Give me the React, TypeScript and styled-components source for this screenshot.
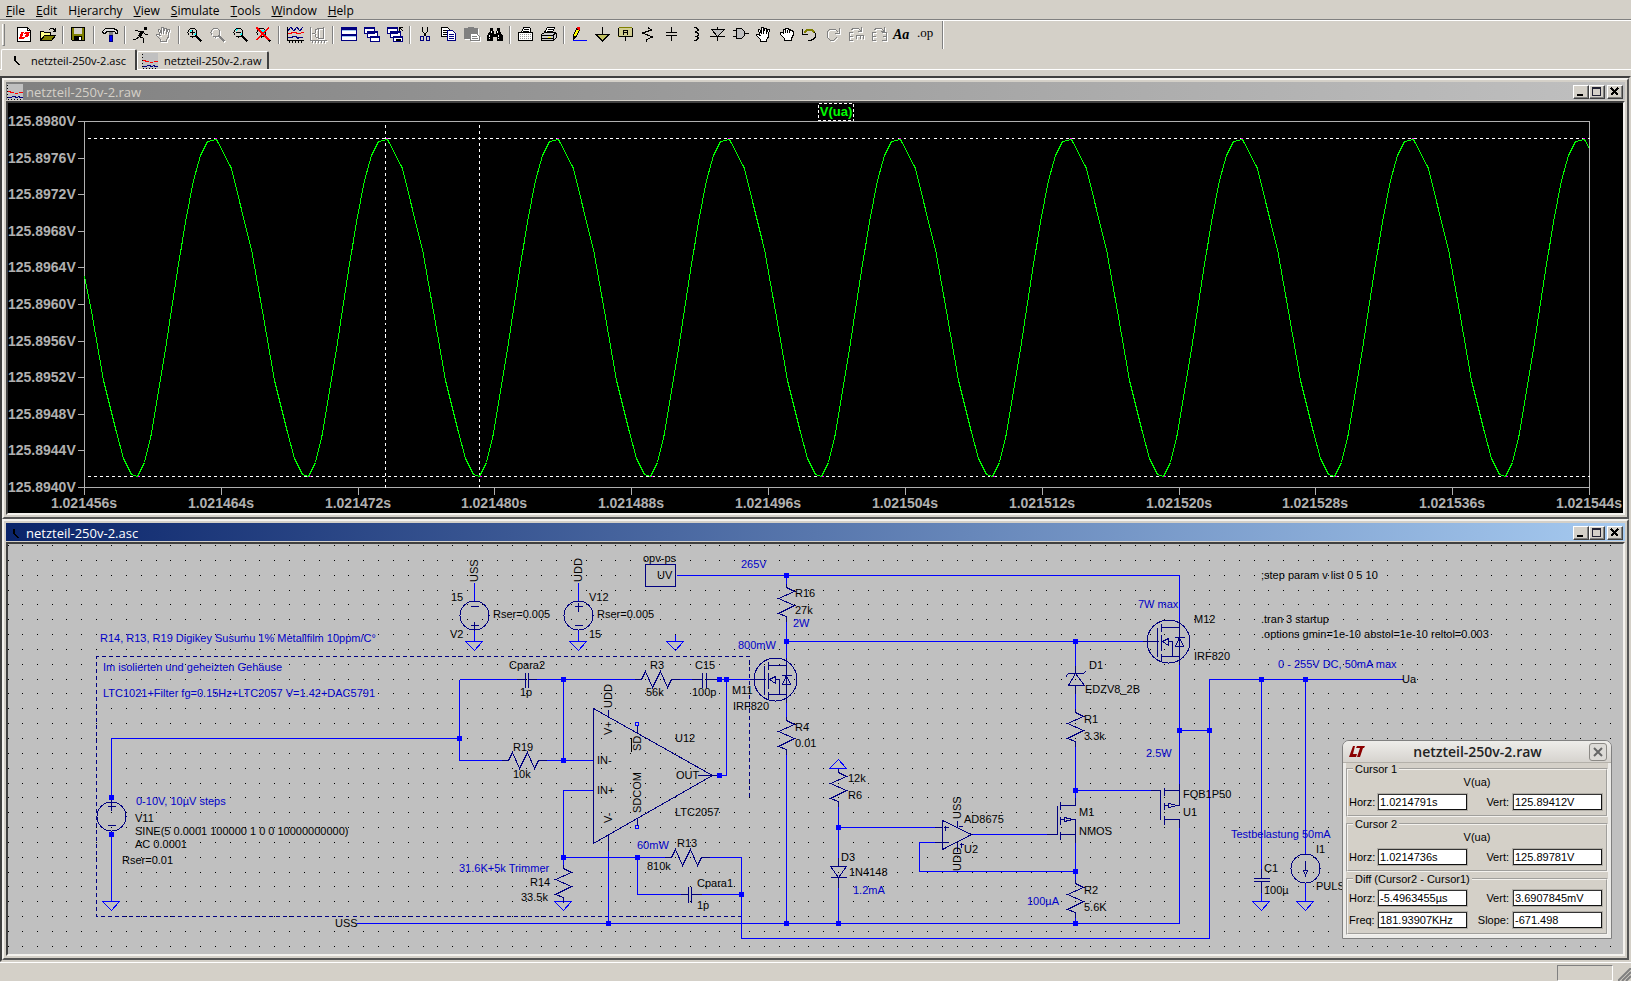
import React from "react";
import styled, { createGlobalStyle } from "styled-components";

const FACE = "#d4d0c8";
const SHADOW = "#808080";
const DARK = "#404040";
const UI_FONT = '"Open Sans", "Noto Sans", sans-serif';

const GlobalStyle = createGlobalStyle`
  html, body { margin: 0; padding: 0; }
  body { background: ${FACE}; color: #000; font-family: ${UI_FONT}; font-size: 12px; }
  * { box-sizing: border-box; }
  button { font: inherit; color: inherit; }
`;

const Shell = styled.div`
  display: flex;
  flex-direction: column;
  min-height: 100vh;
  background: ${FACE};
`;

/* ---------- menu bar ---------- */

const MenuBar = styled.nav`
  display: flex;
  gap: 11px;
  height: 20px;
  padding: 3px 6px 0;
  border-bottom: 1px solid ${SHADOW};
`;

const MenuItem = styled.button`
  padding: 0;
  border: 0;
  background: none;
  line-height: 16px;
`;

const Accel = styled.span`
  text-decoration: underline;
`;

const menus: [string, string, string][] = [
  ["", "F", "ile"],
  ["", "E", "dit"],
  ["H", "i", "erarchy"],
  ["", "V", "iew"],
  ["", "S", "imulate"],
  ["", "T", "ools"],
  ["", "W", "indow"],
  ["", "H", "elp"],
];

/* ---------- toolbar ---------- */

const Toolbar = styled.div`
  display: flex;
  align-items: center;
  height: 29px;
  border-top: 1px solid #fff;
`;

const Grip = styled.span`
  width: 3px;
  height: 22px;
  margin: 0 8px 0 2px;
  border-right: 1px solid ${SHADOW};
  border-bottom: 1px solid ${SHADOW};
  border-left: 1px solid #fff;
`;

const Divider = styled.span`
  width: 2px;
  height: 18px;
  margin: 0 3px;
  border-left: 1px solid ${SHADOW};
  border-right: 1px solid #fff;
`;

const BarEnd = styled.span`
  width: 2px;
  height: 28px;
  margin-left: 6px;
  border-left: 1px solid ${SHADOW};
  border-right: 1px solid #fff;
`;

const ToolButton = styled.button`
  display: flex;
  width: 23px;
  height: 22px;
  padding: 3px 0 0 4px;
  border: 0;
  background: none;
`;

const IconSvg = styled.svg`
  display: block;
  flex: none;
  width: 17px;
  height: 17px;
  overflow: visible;
  fill: none;
  stroke: currentColor;
  shape-rendering: crispEdges;
`;

const GlyphText = styled.text`
  font-family: "Liberation Serif", serif;
  fill: #000;
  stroke: none;
`;

type ToolDef = { name: string; off?: boolean; art: React.ReactNode } | "sep";

const magnifier = (
  <>
    <circle cx="5.5" cy="5.5" r="4.5" />
    <path d="M9 9L14.5 14.5" strokeWidth="2" />
  </>
);

const cascade = (
  <>
    <path d="M.5 .5h10v6h-10zM3.500 4.500h10v6h-10zM6.500 9.500h9v5h-9z" fill="#fff" stroke="#000080" />
    <path d="M1 1.500h9M4 5.500h9M7 10.500h8" stroke="#000080" />
  </>
);

const openHand =
  "M4.5 14.5v-2l-4-4v-1.500h2l2 2-2.500-7h1.500l2 4.500v-6h2v6l1-5.500h1.500v6l2-4.500h1.500l-1.500 8-1.500 2v2.500z";

const tools: ToolDef[] = [
  {
    name: "New schematic",
    art: (
      <>
        <path d="M.5 .5h10l3 3v11h-13z" fill="#fff" />
        <path d="M10.500 .5v3h3" />
        <path d="M4 5h3l-2 5h3l-1 2H2zM8 5h5l-2 5h-3l1-3h-2z" fill="#f00" stroke="none" />
      </>
    ),
  },
  {
    name: "Open",
    art: (
      <>
        <path d="M.5 13.500v-9h3l1 1h6v3" fill="#ff8" />
        <path d="M.5 13.500l4-5h11l-4 5z" fill="#808000" />
        <path d="M9 2.500l2-1h2l2 2M15.500 1v3h-3" />
      </>
    ),
  },
  "sep",
  {
    name: "Save",
    art: (
      <>
        <path d="M.5 .5h13v13h-12l-1-1z" fill="#808000" />
        <path d="M3 1h8v6h-8z" fill={FACE} stroke="none" />
        <path d="M3 9h8v5h-8z" fill="#000" stroke="none" />
        <path d="M8 10h2v3h-2z" fill="#fff" stroke="none" />
      </>
    ),
  },
  "sep",
  {
    name: "Control panel",
    art: (
      <>
        <path d="M.5 4.500l3-3h8l4 2v2.500h-2l-1-1.500h-8l-1 2h-2z" fill="#ddd" />
        <path d="M7 5h4v3h-4z" fill="#808080" stroke="none" />
        <path d="M7 8h3v6h-3z" fill="#00f" stroke="#000080" />
      </>
    ),
  },
  "sep",
  {
    name: "Run",
    art: (
      <>
        <path d="M11 0h3v3h-3z" fill="#000" stroke="none" />
        <path d="M10 4.500l-4 5" strokeWidth="3" />
        <path d="M1.500 3.500h3l1.500 1h4l2 2.500h3M7 10l3 1v4.500M6 10l-3 2h-3" />
      </>
    ),
  },
  { name: "Halt", off: true, art: <path d={openHand} /> },
  "sep",
  {
    name: "Zoom in",
    art: (
      <>
        <path d="M3 3h2v1h-1v2h-1zM7 8h2v-2h-1z" fill="#0ff" stroke="none" />
        {magnifier}
        <path d="M3 5.500h5M5.500 3v5" />
      </>
    ),
  },
  { name: "Pan", off: true, art: magnifier },
  {
    name: "Zoom out",
    art: (
      <>
        <path d="M3 2h2v1h-1v1h-1zM7 8h2v-2h-1z" fill="#0ff" stroke="none" />
        {magnifier}
        <path d="M3 5.500h5" />
      </>
    ),
  },
  {
    name: "Zoom full extents",
    art: (
      <>
        <path d="M5 3h4v6h-2z" fill="#0ff" stroke="none" />
        {magnifier}
        <path d="M0 .5L12.500 13M1 .5L13.500 13M13 .5L.5 13" stroke="#f00" />
      </>
    ),
  },
  "sep",
  {
    name: "Autorange Y",
    art: (
      <>
        <path d="M.5 0v13.500h16M2.500 14v2M5.500 14v2M8.500 14v2M11.500 14v2M14.500 14v2" />
        <path d="M1 4l3-4 3 4 3-4 3 4 3-4M1 10.500h4l1-1h3l2 2 1-1h4" stroke="#000080" />
        <path d="M1 6.500h3l1-1h4l1 1h3l2-1h2" stroke="#f00" />
      </>
    ),
  },
  {
    name: "Pick visible traces",
    off: true,
    art: (
      <path d="M.5 0v13.500h16M2.500 14v2M5.500 14v2M8.500 14v2M11.500 14v2M14.500 14v2M2 6.500h3l1-4 2-1h5M5 7l1 3 2 1h5M13.500 0v12M8.500 2v9" />
    ),
  },
  "sep",
  {
    name: "Tile windows",
    art: (
      <>
        <path d="M.5 .5h15v13h-15z" fill="#fff" stroke="#000080" />
        <path d="M0 2h16M0 8h16" stroke="#000080" strokeWidth="2" />
        <path d="M1 3.500h14M1 9.500h14" stroke="#a6caf0" />
      </>
    ),
  },
  { name: "Cascade windows", art: cascade },
  {
    name: "Close all windows",
    art: (
      <>
        {cascade}
        <path d="M12 .5h4M12.500 0v4M13 1l3 3" />
        <path d="M9 12l5 2M14 12l-5 2" />
      </>
    ),
  },
  "sep",
  {
    name: "Cut",
    art: (
      <>
        <path d="M4.500 0v4l4 6M9.500 0v4l-4 6" />
        <path d="M2.500 9.500h3v4h-3zM8.500 9.500h3v4h-3z" stroke="#000080" />
      </>
    ),
  },
  {
    name: "Copy",
    art: (
      <>
        <path d="M.5 .5h6l2 2v7h-8z" fill="#fff" />
        <path d="M2 3.500h4M2 5.500h4M2 7.500h4" />
        <path d="M6.500 3.500h5l3 3v7h-8z" fill="#fff" stroke="#000080" />
        <path d="M8 7.500h5M8 9.500h5M8 11.500h5" stroke="#000080" />
      </>
    ),
  },
  {
    name: "Paste",
    off: true,
    art: (
      <>
        <path d="M.5 1.500h4v-1h5v1h4v10h-13z" fill="currentColor" />
        <path d="M6.500 6.500h6l3 3v4h-9z" fill="#fff" />
        <path d="M8 9.500h5M8 11.500h6" />
      </>
    ),
  },
  {
    name: "Find",
    art: (
      <>
        <path d="M3 1h3v3h1v3h2v-3h1v-3h3v3l3 5v5h-6v-4h-4v4h-6v-5l3-5z" fill="#000" stroke="none" />
        <path d="M2.500 8v4M4.500 4v3M11.500 8v4M10.500 4v3" stroke="#fff" strokeDasharray="2 1" />
      </>
    ),
  },
  "sep",
  {
    name: "Print preview",
    art: (
      <>
        <path d="M.5 5.500h14v8h-14zM3.500 5.500l2-5h6l1 1v4" fill="#fff" />
        <path d="M2 7.500h11M2 9.500h11M2 11.500h11" stroke="#999" strokeDasharray="1 1" />
        <path d="M6 2.500h5M5 4.500h6" />
      </>
    ),
  },
  {
    name: "Print",
    art: (
      <>
        <path d="M3.500 5.500l3-5h7l-2 5z" fill="#fff" />
        <path d="M.5 7.500l3-2h11l1 1v4l-3 3h-12z" fill="#ccc" />
        <path d="M7 2.500h5M6 4.500h5M1 8.500h11l3-3M1 11.500h11M12.500 9v4" />
        <path d="M7 10.500h3" stroke="#ff0" />
      </>
    ),
  },
  "sep",
  {
    name: "Draw wire",
    art: (
      <>
        <path d="M1.500 8.500l3-7 3 1.500-3 6-3 3z" fill="#ff0" />
        <path d="M5 0h3v3h-2z" fill="#f00" stroke="none" />
        <path d="M1.500 9v3" strokeWidth="2" />
        <path d="M1 13.500h14" stroke="#00f" />
      </>
    ),
  },
  {
    name: "Place ground",
    art: (
      <>
        <path d="M7.500 0v7" />
        <path d="M1 7.500h13l-6.500 6.500z" fill="#c0c060" />
      </>
    ),
  },
  {
    name: "Label net",
    art: (
      <>
        <path d="M.5 1.500l1-1h12l1 1v8h-14z" fill="#d0cc90" stroke="#808000" />
        <path d="M.5 1v8M14.500 1v8M.5 9.500h14M7.500 10v4M5.500 8v-4l1-1h2l1 1v4M6 5.500h3" />
      </>
    ),
  },
  { name: "Resistor", art: <path d="M7.500 0v1l3 2-9 3 10 4-6 2.500v2" /> },
  { name: "Capacitor", art: <path d="M7.500 0v5M2 5.500h11M2 8.500h11M7.500 8v6" /> },
  {
    name: "Inductor",
    art: <path d="M7 .5h2l2 2v1l-2 1h-1M8 5.500h2l1 1v2l-1 1h-2M8 9.500h2l1 1v1l-2 2h-2" />,
  },
  {
    name: "Diode",
    art: (
      <>
        <path d="M7.500 0v14M0 9.500h15" />
        <path d="M1.500 2.500h13l-7 7z" fill="#c0c0c0" />
      </>
    ),
  },
  {
    name: "Component",
    art: (
      <>
        <path d="M3.500 1.500h5l3 3v4l-3 3h-5z" fill="#c0c0c0" />
        <path d="M0 3.500h3M0 9.500h3M12 6.500h4" />
      </>
    ),
  },
  { name: "Move", art: <path d={openHand} fill="#fff" stroke="#000" /> },
  {
    name: "Drag",
    art: (
      <path
        d="M5.500 13.500v-2l-4-4v-2h2l1 1v-4h2l.5-1h2l.5 1h2v1h1.500l1 1v4l-1.500 3v2zM6.500 3v3M8.500 3v3M10.500 3v3"
        fill="#fff"
      />
    ),
  },
  {
    name: "Undo",
    art: (
      <>
        <path d="M2 6l3-3h5l3 3" stroke="#808000" strokeWidth="2" />
        <path d="M.5 2v5h5M12.500 5l1 2v3l-2 2-3 1.500h-3" />
      </>
    ),
  },
  { name: "Redo", off: true, art: <path d="M14.500 1v5h-5M13 5l-3-3h-5l-3 3v5l3 3h4l3-3" /> },
  {
    name: "Rotate",
    off: true,
    art: <path d="M1.500 5v8M1 5.500h4M1 9.500h4M1 13.500h4M8 8.500h8M8.500 8v4M12.500 8v4M15.500 8v4M3 3l3-2h4l3 3M13.500 0v4h-4" />,
  },
  {
    name: "Mirror",
    off: true,
    art: <path d="M1.500 5v8M1 5.500h4M1 9.500h4M1 13.500h4M15.500 5v8M11 5.500h5M12 9.500h4M11 13.500h5M3 3l3-2h4l3 3M13.500 0v4h-4" />,
  },
  {
    name: "Text",
    art: (
      <GlyphText x="-1" y="12" fontSize="14" fontStyle="italic" fontWeight="bold">
        Aa
      </GlyphText>
    ),
  },
  {
    name: "SPICE directive",
    art: (
      <GlyphText x="0" y="10" fontSize="13">
        .op
      </GlyphText>
    ),
  },
];

function Tool({ def }: { def: ToolDef }) {
  if (def === "sep") return <Divider />;
  return (
    <ToolButton type="button" aria-label={def.name} disabled={def.off}>
      <IconSvg viewBox="0 0 17 17" color="#000">
        {def.off ? (
          <>
            <g transform="translate(1 1)" color="#fff" stroke="#fff">
              {def.art}
            </g>
            <g color={SHADOW} stroke={SHADOW}>
              {def.art}
            </g>
          </>
        ) : (
          def.art
        )}
      </IconSvg>
    </ToolButton>
  );
}

/* ---------- tabs ---------- */

const TabStrip = styled.div`
  display: flex;
  align-items: flex-end;
  height: 21px;
  margin-bottom: 6px;
  padding-left: 1px;
  border-bottom: 1px solid #fff;
  font-size: 11px;
`;

const Tab = styled.button<{ $active?: boolean }>`
  display: flex;
  align-items: center;
  gap: ${(p) => (p.$active ? 7 : 6)}px;
  width: ${(p) => (p.$active ? 136 : 132)}px;
  height: ${(p) => (p.$active ? 21 : 18)}px;
  margin-bottom: ${(p) => (p.$active ? -1 : 0)}px;
  padding: 0 0 0 ${(p) => (p.$active ? 6 : 4)}px;
  border: 0;
  border-top: 1px solid #fff;
  border-left: 1px solid #fff;
  border-right: 2px solid ${DARK};
  border-radius: 2px 2px 0 0;
  background: ${FACE};
  white-space: nowrap;
`;

const DocIcon = styled.svg`
  display: block;
  flex: none;
  width: 16px;
  height: 16px;
  fill: none;
  shape-rendering: crispEdges;
`;

const SchematicIcon = () => (
  <DocIcon viewBox="0 0 16 16" aria-hidden="true">
    <path d="M6 4h2v5h1v1h1v1h1v1h1v1h-2v-1h-1v-1h-1v-1h-1v-1h-1z" fill="#000" />
  </DocIcon>
);

const WaveIcon = () => (
  <DocIcon viewBox="0 0 16 16" aria-hidden="true">
    <path d="M0 0h16v16h-16z" fill="#c0c0c0" />
    <path d="M.5 1v15" stroke="#000" strokeDasharray="1 2" />
    <path d="M1 15.500h15" stroke="#000" strokeDasharray="1 2" />
    <path d="M1 7.500h2l1 1h3M8 9.500h3M12 8.500h4" stroke="#f00" />
    <path d="M1 13.500h4M5 12.500h4M8 13.500h3M11 12.500h2M12 13.500h4" stroke="#000080" />
  </DocIcon>
);

/* ---------- child windows ---------- */

const Mdi = styled.main`
  display: flex;
  flex: 1;
  flex-direction: column;
  border: 2px solid;
  border-color: ${DARK} ${FACE} ${FACE} ${DARK};
  background: ${SHADOW};
`;

const ChildWindow = styled.section`
  display: flex;
  flex: 1;
  flex-direction: column;
  padding: 2px;
  border: 2px solid;
  border-color: #f4f2ee #555 #555 #f4f2ee;
  background: ${FACE};
`;

const TitleBar = styled.header<{ $active?: boolean }>`
  display: flex;
  align-items: center;
  height: 18px;
  margin-bottom: 1px;
  padding: 1px 2px 0 1px;
  background: ${(p) =>
    p.$active
      ? "linear-gradient(90deg, #0a246a, #a6caf0)"
      : "linear-gradient(90deg, #808080, #c0c0c0)"};
  color: ${(p) => (p.$active ? "#fff" : FACE)};
`;

const TitleText = styled.h2`
  flex: 1;
  margin: 0 0 0 3px;
  padding-top: 1px;
  font-size: 13px;
  font-weight: 400;
  line-height: 18px;
`;

const CaptionButton = styled.button<{ $apart?: boolean }>`
  display: flex;
  width: 16px;
  height: 14px;
  margin-left: ${(p) => (p.$apart ? 2 : 0)}px;
  padding: 0;
  border: 1px solid;
  border-color: #fff ${DARK} ${DARK} #fff;
  background: ${FACE};
  box-shadow: inset -1px -1px ${SHADOW};
  svg { width: 14px; height: 12px; fill: none; stroke: #000; shape-rendering: crispEdges; }
`;

const Client = styled.div<{ $dark?: boolean }>`
  position: relative;
  flex: 1;
  border: 2px solid;
  border-color: ${DARK} #f4f2ee #f4f2ee ${DARK};
  background: ${(p) => (p.$dark ? "#000" : "#c0c0c0")};
  overflow: hidden;
`;

const Drawing = styled.svg`
  display: block;
  width: 100%;
  fill: none;
  shape-rendering: crispEdges;
`;

function DocWindow(props: {
  title: string;
  active?: boolean;
  dark?: boolean;
  icon: React.ReactNode;
  children: React.ReactNode;
}) {
  return (
    <ChildWindow>
      <TitleBar $active={props.active}>
        {props.icon}
        <TitleText>{props.title}</TitleText>
        <CaptionButton type="button" aria-label="Minimize">
          <svg viewBox="0 0 14 12"><path d="M3 9h6" strokeWidth="2" /></svg>
        </CaptionButton>
        <CaptionButton type="button" aria-label="Maximize">
          <svg viewBox="0 0 14 12"><path d="M2.500 1.500h8v8h-8zM2 2.500h9" stroke="#223" /></svg>
        </CaptionButton>
        <CaptionButton type="button" aria-label="Close" $apart>
          <svg viewBox="0 0 14 12"><path d="M3 2l7 7M10 2l-7 7" strokeWidth="2" /></svg>
        </CaptionButton>
      </TitleBar>
      <Client $dark={props.dark}>{props.children}</Client>
    </ChildWindow>
  );
}

/* ---------- waveform ---------- */

const AxisText = styled.text`
  font: bold 14px "Liberation Sans", Arial, sans-serif;
  fill: #b0b0b0;
`;

const TraceText = styled.text`
  font: bold 13px "Liberation Sans", Arial, sans-serif;
  fill: #0f0;
`;

const PLOT = { left: 76, right: 1581, top: 18, bottom: 384 };
const yLabels = ["125.8980V", "125.8976V", "125.8972V", "125.8968V", "125.8964V", "125.8960V",
  "125.8956V", "125.8952V", "125.8948V", "125.8944V", "125.8940V"];
const xLabels = ["1.021456s", "1.021464s", "1.021472s", "1.021480s", "1.021488s", "1.021496s",
  "1.021504s", "1.021512s", "1.021520s", "1.021528s", "1.021536s", "1.021544s"];
const PERIOD = 171;
const cycle: [number, number][] = [
  [0, 373], [7, 359], [14, 330], [20, 294], [27, 252], [40, 167], [49, 113], [56, 77],
  [63, 52], [70, 38], [79, 36], [94, 65], [104, 106], [114, 146], [125, 208],
  [137, 277], [150, 329], [157, 355], [165, 371],
];

function tracePath() {
  const pts: string[] = [];
  for (let n = -1; n < 9; n++) {
    for (const [dx, y] of cycle) {
      const x = 129 + n * PERIOD + dx;
      if (x > PLOT.left + 2 && x <= PLOT.right) pts.push(`${x} ${y}`);
    }
  }
  return `M${PLOT.left} 173L${pts.join("L")}L${PLOT.right} 45`;
}

function Waveform() {
  const yStep = (PLOT.bottom - PLOT.top) / 10;
  const xStep = (PLOT.right - PLOT.left) / 11;
  const ys = yLabels.map((_, i) => Math.round(PLOT.top + i * yStep));
  const xs = xLabels.map((_, i) => Math.round(PLOT.left + i * xStep));
  return (
    <Drawing viewBox="0 0 1615 410" role="img" aria-label="Waveform of V(ua)">
      <g transform="translate(.5 .5)">
        <path
          stroke="#b0b0b0"
          d={
            `M${PLOT.left} ${PLOT.top}H${PLOT.right}V${PLOT.bottom}H${PLOT.left}Z` +
            ys.map((y) => `M69 ${y}h7`).join("") +
            xs.map((x) => `M${x} ${PLOT.bottom}v7`).join("")
          }
        />
        <path stroke="#fff" strokeDasharray="3 3" d="M79 35H1581M79 373H1581M377 21V384M471 21V384" />
        <path stroke="#0f0" d={tracePath()} />
        <path
          stroke="#f0f"
          d={Array.from({ length: 9 }, (_, n) => `M${129 + n * PERIOD} 373h2M${206 + n * PERIOD} 35h2`).join("")}
        />
        <rect x="810" y="0" width="35" height="17" stroke="#fff" strokeDasharray="3 2" />
      </g>
      <TraceText x="828" y="13" textAnchor="middle">V(ua)</TraceText>
      {yLabels.map((t, i) => (
        <AxisText key={t} x="0" y={ys[i] + 5}>{t}</AxisText>
      ))}
      {xLabels.map((t, i) => (
        <AxisText key={t} x={xs[i]} y="405" textAnchor="middle">{t}</AxisText>
      ))}
    </Drawing>
  );
}

/* ---------- schematic ---------- */

const NetText = styled.text<{ $note?: boolean }>`
  font: 11px "Liberation Sans", Arial, sans-serif;
  fill: ${(p) => (p.$note ? "#0000c8" : "#000")};
`;

const WIRE = "#0000ff";
const PART = "#000080";

const gridPath = (() => {
  let d = "";
  for (let j = 0; j < 28; j++) {
    const y = Math.round(545 + j * 14.846);
    for (let i = -7; i < 102; i++) d += `M${Math.max(8, Math.round(111 + i * 14.838))} ${y}h1`;
  }
  return d;
})();

const wires = [
  "M111 797V738H459M459 679V760M111 834V901",
  "M474 582V601M474 630V641M578 582V601M578 630V641M675 634V641",
  "M676 575H1179V619M786 575V583M786 618V657M786 641H1143",
  "M459 679H516M536 679H634M679 679H691M717 679H749M563 679V760M459 760H503M545 760H593",
  "M726 679V775H719M593 790H563V864M563 857H664M708 857H741V938H1209V679H1403M637 857V894H680M701 894H741",
  "M608 850V923M356 923H1179V827M786 702V716M786 754V923",
  "M838 806V857M838 887V923M838 827H934M934 842H919V871H1075M972 834H1046M1075 842V879M1075 917V923",
  "M1075 641V665M1075 693V708M1075 746V797M1075 790H1150M1179 664V783M1179 730H1209",
  "M1261 679V868M1261 892V901M1305 679V853M1305 883V901",
].join("");

const nodes: [number, number][] = [
  [111, 797], [111, 834], [459, 738], [563, 679], [563, 760], [563, 857], [637, 857], [719, 679],
  [726, 679], [719, 775], [741, 894], [608, 923], [786, 575], [786, 641], [786, 923], [838, 827],
  [838, 923], [1075, 641], [1075, 790], [1075, 871], [1075, 923], [1179, 730], [1209, 730],
  [1261, 679], [1305, 679],
];

const grounds: [number, number][] = [
  [111, 901], [474, 641], [578, 641], [675, 641], [563, 901], [1261, 901], [1305, 901],
];

const vResistors: [number, number][] = [[786, 587], [786, 720], [838, 772], [563, 868], [1075, 712], [1075, 883]];
const hResistors: [number, number][] = [[641, 679], [508, 760], [671, 857]];

const parts = [
  "M645 564H675V586H645Z",
  "M593 708V843L712 775ZM697 775H719M608 709V716M608 834V850M637 725V733M637 817V825",
  "M516 679H525M525 672V687M528 672V687M528 679H536",
  "M691 679H702M702 672V687M706 672V687M706 679H717",
  "M680 894H688M688 886V902M691 886V902M691 894H701",
  "M838 857V866M830 866H846L838 877ZM830 877H846M838 877V887",
  "M942 820V849L971 834ZM934 827H942M943 827H948M945 825V830M934 842H948M957 820V826M958 826H962M957 842V851M959 844H963M961 842V847",
  "M1075 665V673M1066 676V675L1068 673H1083L1085 671M1075 673L1068 685H1084ZM1075 685V693",
  "M1046 834H1057V805M1060 801V809M1060 816V824M1060 831V839M1060 805H1075V797M1060 834H1075M1060 819H1064M1072 819H1075V842M1064 817L1072 819L1064 821Z",
  "M1150 790H1160V819M1164 787V795M1164 802V809M1164 815V824M1164 790H1179M1179 783V805H1177M1168 805H1164M1168 803L1177 805L1168 807ZM1164 819H1179V827",
  "M1261 868V878M1253 878H1269M1253 881H1269M1261 881V892",
  "M1305 860V870M1303 870H1307L1305 875Z",
  "M107 806H115M111 801V810M107 825H115M111 797V801M111 830V834",
  "M470 606H478M470 625H478M474 621V630M574 606H582M578 602V611M574 625H582",
].join("");

const mosfets: [number, number][] = [[786, 679], [1179, 641]];
const sources: [number, number][] = [[111, 816], [474, 615], [578, 615], [1305, 868]];

type Label = [number, number, string];

const labels: Label[] = [
  [135, 822, "V11"], [135, 835, "SINE(5 0.0001 100000 1 0 0 10000000000)"], [135, 848, "AC 0.0001"],
  [122, 864, "Rser=0.01"], [335, 927, "USS"], [451, 601, "15"], [450, 638, "V2"], [493, 618, "Rser=0.005"],
  [589, 601, "V12"], [597, 618, "Rser=0.005"], [589, 638, "15"], [643, 562, "opv-ps"], [657, 579, "UV"],
  [795, 597, "R16"], [795, 614, "27k"], [509, 669, "Cpara2"], [520, 696, "1p"], [650, 669, "R3"],
  [646, 696, "56k"], [695, 669, "C15"], [692, 696, "100p"], [732, 694, "M11"], [733, 710, "IRF820"],
  [675, 742, "U12"], [513, 751, "R19"], [513, 778, "10k"], [597, 764, "IN-"], [597, 794, "IN+"],
  [676, 779, "OUT"], [675, 816, "LTC2057"], [795, 731, "R4"], [795, 747, "0.01"], [677, 847, "R13"],
  [647, 870, "810k"], [530, 886, "R14"], [521, 901, "33.5k"], [697, 887, "Cpara1"], [697, 909, "1p"],
  [848, 782, "12k"], [848, 799, "R6"], [841, 861, "D3"], [849, 876, "1N4148"], [964, 823, "AD8675"],
  [964, 853, "U2"], [1089, 669, "D1"], [1085, 693, "EDZV8_2B"], [1084, 723, "R1"], [1084, 740, "3.3k"],
  [1079, 816, "M1"], [1079, 835, "NMOS"], [1084, 894, "R2"], [1084, 911, "5.6K"], [1194, 623, "M12"],
  [1194, 660, "IRF820"], [1183, 798, "FQB1P50"], [1183, 816, "U1"], [1261, 579, ";step param v list 0 5 10"],
  [1261, 623, ".tran 3 startup"], [1261, 638, ".options gmin=1e-10 abstol=1e-10 reltol=0.003"],
  [1402, 683, "Ua"], [1316, 853, "I1"], [1264, 872, "C1"], [1264, 894, "100µ"], [1316, 890, "PULSE"],
];

const notes: Label[] = [
  [100, 642, "R14, R13, R19 Digikey Susumu 1% Metallfilm 10ppm/C°"],
  [103, 671, "Im isolierten und geheizten Gehäuse"],
  [103, 697, "LTC1021+Filter fg=0.15Hz+LTC2057 V=1.42+DAC5791"],
  [136, 805, "0-10V, 10µV steps"], [459, 872, "31.6K+5k Trimmer"], [741, 568, "265V"], [793, 627, "2W"],
  [738, 649, "800mW"], [637, 849, "60mW"], [853, 894, "1.2mA"], [1027, 905, "100µA"], [1138, 608, "7W max"],
  [1146, 757, "2.5W"], [1278, 668, "0 - 255V DC, 50mA max"], [1231, 838, "Testbelastung 50mA"],
];

const uprights: Label[] = [
  [478, 582, "USS"], [582, 582, "UDD"], [612, 708, "UDD"], [612, 735, "V+"], [641, 751, "SD"],
  [641, 813, "SDCOM"], [612, 823, "V-"], [961, 819, "USS"], [961, 871, "UDD"],
];

function Schematic() {
  return (
    <Drawing viewBox="8 544 1615 410" role="img" aria-label="Power supply schematic">
      <g transform="translate(.5 .5)">
        <path stroke="#000" d={gridPath} transform="translate(-.5 0)" />
        <path stroke={PART} strokeDasharray="4 3" d="M741 916H96V656H749V798" />
        <path stroke={WIRE} d={wires} />
        {grounds.map(([x, y]) => (
          <path key={`${x}-${y}`} stroke={WIRE} d={`M${x - 9} ${y}h17l-8 9z`} />
        ))}
        <path stroke={WIRE} d="M829 768H846L838 759ZM635 722h3v3h-3zM635 825h3v3h-3z" />
        <path stroke={PART} d={parts} />
        {vResistors.map(([x, y]) => (
          <path key={`${x}-${y}`} stroke={PART} d={`M${x} ${y - 4}v4l8 4-16 7 16 7-16 8 8 3v5`} />
        ))}
        {hResistors.map(([x, y]) => (
          <path key={`${x}-${y}`} stroke={PART} d={`M${x - 7} ${y}h7l4-8 7 16 8-16 7 16 4-8h8`} />
        ))}
        {sources.map(([x, y]) => (
          <circle key={`${x}-${y}`} cx={x} cy={y} r="14.5" stroke={PART} />
        ))}
        {mosfets.map(([x, y]) => (
          <g key={`${x}-${y}`} stroke={PART} transform={`translate(${x} ${y})`}>
            <circle cx="-11" cy="0" r="21.5" />
            <path d="M-37 0H-21M-22 -14V15M-18 -18V-10M-18 -7V9M-18 12V20M-18 -14H0M-18 15H0M0 -22V23" />
            <path d="M-17 0L-11 -3V4ZM-11 0H-7V15M-4 5H4L0 -4ZM-5 -4H5" />
          </g>
        ))}
      </g>
      <path
        fill={WIRE}
        d={nodes.map(([x, y]) => `M${x - 2} ${y - 2}h5v5h-5z`).join("")}
      />
      <path stroke="#000" d="M631.500 738v14" />
      {labels.map(([x, y, t]) => (
        <NetText key={`${x}-${y}`} x={x} y={y}>{t}</NetText>
      ))}
      {notes.map(([x, y, t]) => (
        <NetText $note key={`${x}-${y}`} x={x} y={y}>{t}</NetText>
      ))}
      {uprights.map(([x, y, t]) => (
        <NetText key={`${x}-${y}`} transform={`translate(${x} ${y}) rotate(-90)`}>{t}</NetText>
      ))}
    </Drawing>
  );
}

/* ---------- cursor read-out dialog ---------- */

const Dialog = styled.div`
  position: absolute;
  right: 11px;
  bottom: 15px;
  width: 270px;
  border: 1px solid ${SHADOW};
  border-radius: 7px 7px 0 0;
  background: #ecebe8;
  font-family: "Liberation Sans", Arial, sans-serif;
  font-size: 11px;
`;

const DialogTitle = styled.header`
  display: flex;
  align-items: center;
  height: 22px;
  padding: 0 4px 0 6px;
  border-bottom: 1px solid #b4b1aa;
  border-radius: 6px 6px 0 0;
  background: linear-gradient(#eeedea, #d6d3ce);
  svg { flex: none; }
`;

const DialogCaption = styled.h3`
  flex: 1;
  margin: 0;
  font-family: ${UI_FONT};
  font-size: 14px;
  font-weight: 600;
  line-height: 20px;
  text-align: center;
  color: #222;
`;

const DialogClose = styled.button`
  display: flex;
  align-items: center;
  justify-content: center;
  width: 18px;
  height: 18px;
  padding: 0;
  border: 1px solid #8c8a86;
  border-radius: 3px;
  background: #dddbd7;
`;

const DialogBody = styled.div`
  display: flex;
  flex-direction: column;
  gap: 2px;
  margin: 0 3px 3px;
  padding-top: 1px;
  background: ${FACE};
`;

const Group = styled.fieldset`
  min-width: 0;
  margin: 0;
  padding: 1px 1px 4px;
  border: 2px groove #f4f2ee;
`;

const Legend = styled.legend`
  margin-left: 4px;
  padding: 0 2px;
  line-height: 10px;
`;

const TraceName = styled.p`
  margin: 0 0 4px;
  line-height: 14px;
  text-align: center;
`;

const Fields = styled.div<{ $inset?: boolean }>`
  display: grid;
  grid-template-columns: 25px 91px 38px 91px;
  gap: 4px 3px;
  padding-top: ${(p) => (p.$inset ? 4 : 0)}px;
  align-items: center;
`;

const FieldLabel = styled.label`
  line-height: 18px;
  text-align: right;
  white-space: nowrap;
`;

const FieldInput = styled.input`
  width: 100%;
  height: 18px;
  padding: 0 1px;
  border: 2px solid;
  border-color: #333 #111 #111 #333;
  outline: 1px solid #b0ada6;
  outline-offset: -1px;
  background: #fff;
  font: inherit;
`;

function Field({ id, label, value }: { id: string; label: string; value: string }) {
  return (
    <>
      <FieldLabel htmlFor={id}>{label}</FieldLabel>
      <FieldInput id={id} defaultValue={value} />
    </>
  );
}

function CursorDialog() {
  return (
    <Dialog role="dialog" aria-labelledby="cursor-title">
      <DialogTitle>
        <svg width="17" height="11" viewBox="0 0 17 11" aria-hidden="true">
          <path d="M4 0h2L4 8h4l-1 3H0zM8 0h8l-1 2h-1l-3 9h-3l3-9h-4z" fill="#8b0000" />
        </svg>
        <DialogCaption id="cursor-title">netzteil-250v-2.raw</DialogCaption>
        <DialogClose type="button" aria-label="Close">
          <svg width="10" height="10" viewBox="0 0 10 10">
            <path d="M1 1l8 8M9 1l-8 8" stroke="#666" strokeWidth="2" />
          </svg>
        </DialogClose>
      </DialogTitle>
      <DialogBody>
        <Group>
          <Legend>Cursor 1</Legend>
          <TraceName>V(ua)</TraceName>
          <Fields>
            <Field id="c1h" label="Horz:" value="1.0214791s" />
            <Field id="c1v" label="Vert:" value="125.89412V" />
          </Fields>
        </Group>
        <Group>
          <Legend>Cursor 2</Legend>
          <TraceName>V(ua)</TraceName>
          <Fields>
            <Field id="c2h" label="Horz:" value="1.0214736s" />
            <Field id="c2v" label="Vert:" value="125.89781V" />
          </Fields>
        </Group>
        <Group>
          <Legend>Diff (Cursor2 - Cursor1)</Legend>
          <Fields $inset>
            <Field id="dh" label="Horz:" value="-5.4963455µs" />
            <Field id="dv" label="Vert:" value="3.6907845mV" />
            <Field id="df" label="Freq:" value="181.93907KHz" />
            <Field id="ds" label="Slope:" value="-671.498" />
          </Fields>
        </Group>
      </DialogBody>
    </Dialog>
  );
}

/* ---------- status bar ---------- */

const StatusBar = styled.footer`
  display: flex;
  justify-content: flex-end;
  height: 19px;
  padding-top: 2px;
  border-top: 1px solid #fff;
`;

const StatusPane = styled.span`
  width: 56px;
  border: 1px solid;
  border-color: ${SHADOW} #fff #fff ${SHADOW};
`;

const SizeGrip = styled.svg`
  align-self: flex-end;
  width: 13px;
  height: 13px;
  margin-left: 5px;
`;

export default function App() {
  return (
    <>
      <GlobalStyle />
      <Shell>
        <MenuBar>
          {menus.map(([pre, key, post]) => (
            <MenuItem type="button" key={pre + key + post}>
              {pre}
              <Accel>{key}</Accel>
              {post}
            </MenuItem>
          ))}
        </MenuBar>
        <Toolbar role="toolbar">
          <Grip />
          {tools.map((def, i) => (
            <Tool key={i} def={def} />
          ))}
          <BarEnd />
        </Toolbar>
        <TabStrip>
          <Tab type="button" $active>
            <SchematicIcon />
            netzteil-250v-2.asc
          </Tab>
          <Tab type="button">
            <WaveIcon />
            netzteil-250v-2.raw
          </Tab>
        </TabStrip>
        <Mdi>
          <DocWindow title="netzteil-250v-2.raw" icon={<WaveIcon />} dark>
            <Waveform />
          </DocWindow>
          <DocWindow title="netzteil-250v-2.asc" icon={<SchematicIcon />} active>
            <Schematic />
            <CursorDialog />
          </DocWindow>
        </Mdi>
        <StatusBar>
          <StatusPane />
          <SizeGrip viewBox="0 0 13 13" aria-hidden="true">
            <path d="M0 13L13 0M4 13L13 4M8 13L13 8" stroke={SHADOW} strokeWidth="2" />
          </SizeGrip>
        </StatusBar>
      </Shell>
    </>
  );
}
